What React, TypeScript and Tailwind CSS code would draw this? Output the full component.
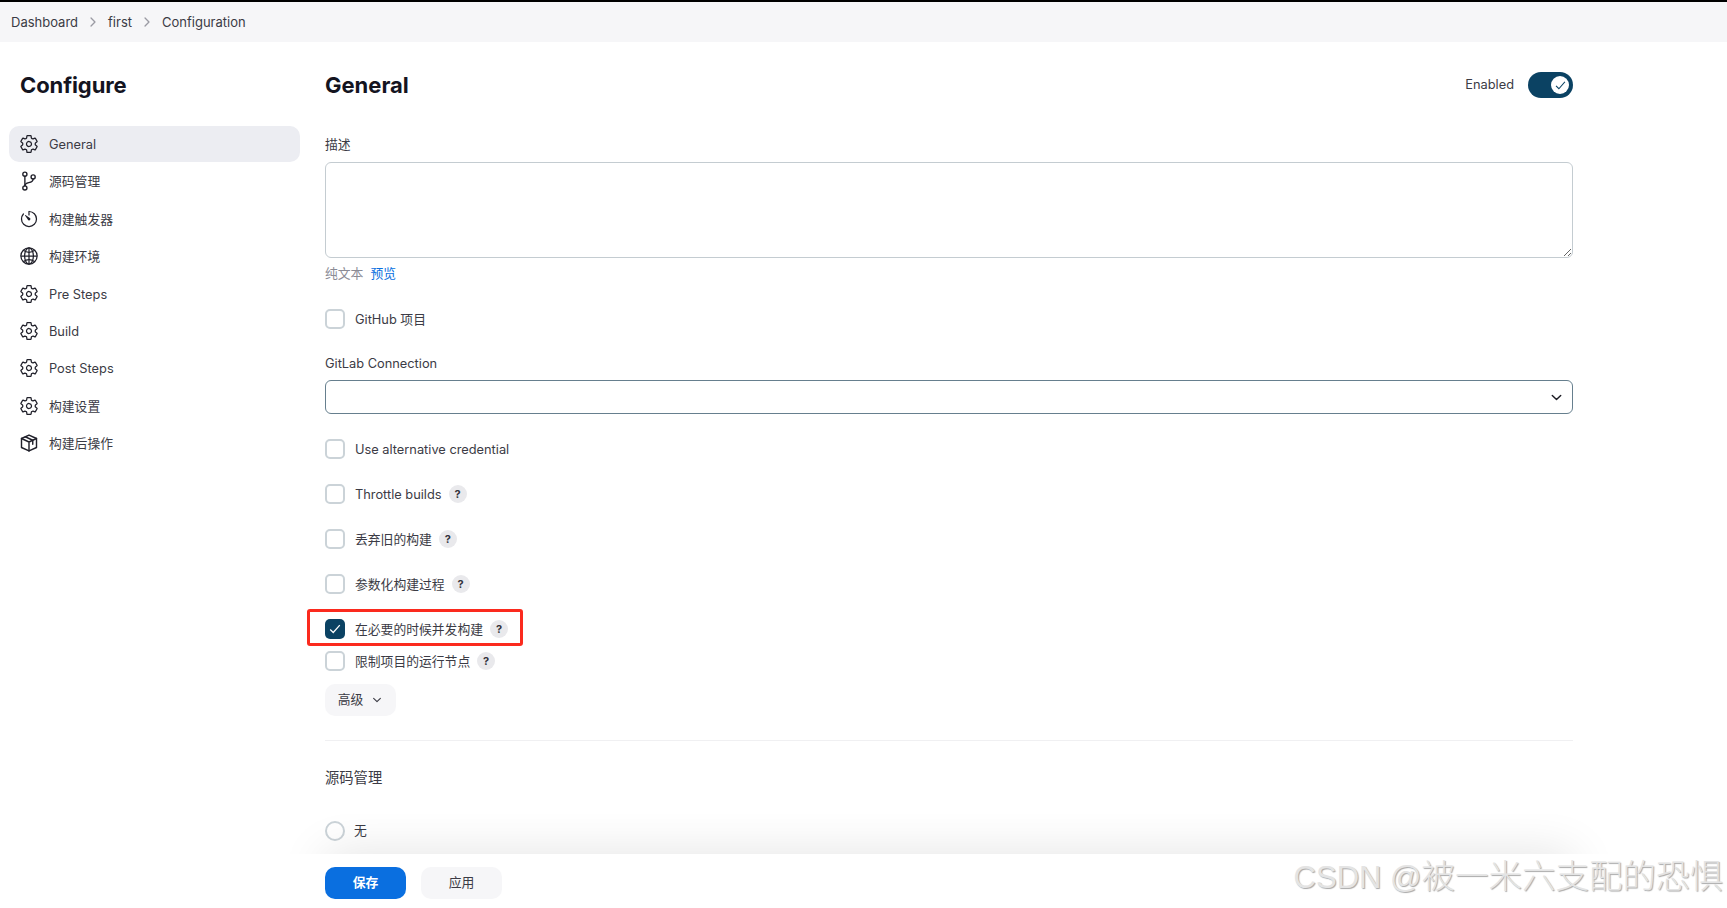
import {
  IoSettingsOutline,
  IoGitBranchOutline,
  IoTimerOutline,
  IoGlobeOutline,
  IoChevronDown,
  IoChevronForward,
  IoCheckmarkSharp,
} from "react-icons/io5";
import type { IconType } from "react-icons";

// box with a strap, the packaged-cube symbol used for the last nav entry
function PackageIcon({ className }: { className?: string }) {
  return (
    <svg viewBox="0 0 24 24" fill="none" stroke="currentColor" strokeWidth="1.7" strokeLinejoin="round" strokeLinecap="round" className={className}>
      <path d="M12 2.5 3 6.6v10.8l9 4.1 9-4.1V6.6z" />
      <path d="M3 6.6l9 4.2 9-4.2M12 10.8v10.7" />
      <path d="M7.5 4.5l9 4.2v4.8" />
    </svg>
  );
}

const navItems: { label: string; icon: IconType | typeof PackageIcon; iconClass: string }[] = [
  { label: "General", icon: IoSettingsOutline, iconClass: "text-[20px]" },
  { label: "源码管理", icon: IoGitBranchOutline, iconClass: "text-[22px] -mx-px" },
  { label: "构建触发器", icon: IoTimerOutline, iconClass: "text-[20px]" },
  { label: "构建环境", icon: IoGlobeOutline, iconClass: "text-[20px]" },
  { label: "Pre Steps", icon: IoSettingsOutline, iconClass: "text-[20px]" },
  { label: "Build", icon: IoSettingsOutline, iconClass: "text-[20px]" },
  { label: "Post Steps", icon: IoSettingsOutline, iconClass: "text-[20px]" },
  { label: "构建设置", icon: IoSettingsOutline, iconClass: "text-[20px]" },
  { label: "构建后操作", icon: PackageIcon, iconClass: "h-5 w-5" },
];

function Help() {
  return (
    <span className="ml-[7px] flex h-[18px] w-[18px] items-center justify-center rounded-full bg-[#e9e9ec] text-[11px] font-bold text-[#33333d]">
      ?
    </span>
  );
}

function Check({ label, help, className }: { label: string; help?: boolean; className: string }) {
  return (
    <div className={`flex h-5 items-center ${className}`}>
      <span className="h-5 w-5 rounded-[5px] border-2 border-[#cbd3d8] bg-white" />
      <span className="ml-[10px] pt-[2px]">{label}</span>
      {help && <Help />}
    </div>
  );
}

export default function App() {
  return (
    <div className="relative flex h-screen flex-col overflow-hidden bg-white text-[12.8px] leading-5 text-[#3b3b45] [font-family:Inter,'Noto_Sans_CJK_SC',sans-serif]">
      {/* breadcrumb */}
      <header className="flex h-[42px] shrink-0 items-center border-t-2 border-black bg-[#f6f6f8] pl-[11px] text-[13px]">
        <span>Dashboard</span>
        <IoChevronForward className="mx-[8px] text-[14px] text-[#9a9aa3]" />
        <span>first</span>
        <IoChevronForward className="mx-[8px] text-[14px] text-[#9a9aa3]" />
        <span>Configuration</span>
      </header>

      <div className="flex min-h-0 flex-1">
        {/* side panel */}
        <aside className="w-[325px] shrink-0 pl-[9px]">
          <h1 className="mt-[25px] flex h-9 items-center pl-[11px] text-[22px] font-bold tracking-[-0.1px] text-[#14141f]">
            Configure
          </h1>
          <nav className="mt-[23px] w-[291px]">
            {navItems.map((item, i) => (
              <div
                key={item.label}
                className={`mb-[1.4px] flex h-9 items-center rounded-[10px] pl-[10px] ${i === 0 ? "bg-[#ecedf2]" : ""}`}
              >
                <item.icon className={`text-[#20202a] ${item.iconClass}`} />
                <span className="ml-[10px] pt-[2px]">{item.label}</span>
              </div>
            ))}
          </nav>
        </aside>

        {/* form */}
        <main className="w-[1248px] shrink-0">
          <div className="mt-[25px] flex h-9 items-center justify-between">
            <h2 className="text-[22px] font-bold text-[#14141f]">General</h2>
            <div className="flex items-center">
              <span>Enabled</span>
              <span className="ml-[14px] flex h-[26px] w-[45px] items-center justify-end rounded-full bg-[#0b4263] pr-[4px]">
                <span className="flex h-[18px] w-[18px] items-center justify-center rounded-full bg-white">
                  <IoCheckmarkSharp className="text-[13px] text-[#0b4263]" />
                </span>
              </span>
            </div>
          </div>

          <div className="mt-[32px] h-[19px]">描述</div>
          <textarea
            readOnly
            className="mt-[8px] block h-[96px] w-full resize-y rounded-[6px] border border-[#c4ccd1] bg-white"
          />
          <div className="mt-[5px] flex h-5 items-center pt-[2px]">
            <span className="text-[#8b8b95]">纯文本</span>
            <span className="ml-[7px] text-[#0a6fe0]">预览</span>
          </div>

          <Check label="GitHub 项目" className="mt-[26px]" />

          <div className="mt-[25px] h-[19px]">GitLab Connection</div>
          <div className="mt-[7px] flex h-[34px] items-center justify-end rounded-[6px] border border-[#667f8e] pr-[8px]">
            <IoChevronDown className="text-[15px] text-[#1c1c24]" />
          </div>

          <Check label="Use alternative credential" className="mt-[25px]" />
          <Check label="Throttle builds" help className="mt-[25px]" />
          <Check label="丢弃旧的构建" help className="mt-[25px]" />
          <Check label="参数化构建过程" help className="mt-[25px]" />

          <div className="relative mt-[25px] flex h-5 items-center">
            <span className="flex h-5 w-5 items-center justify-center rounded-[5px] bg-[#0b4263]">
              <IoCheckmarkSharp className="text-[14px] text-white" />
            </span>
            <span className="ml-[10px] pt-[2px]">在必要的时候并发构建</span>
            <Help />
            {/* annotation box from the screenshot */}
            <span className="absolute -top-[10px] -left-[18px] h-[37px] w-[216px] rounded-[3px] border-[3px] border-[#fb2a1e]" />
          </div>

          <Check label="限制项目的运行节点" help className="mt-[12px]" />

          <button className="mt-[13px] flex h-8 w-[71px] items-center justify-center gap-[8px] rounded-[10px] bg-[#f6f6f8]">
            高级
            <IoChevronDown className="text-[12px]" />
          </button>

          <div className="mt-[24px] h-px bg-[#f0f0f2]" />
          <div className="mt-[27px] h-5 text-[14.3px]">源码管理</div>

          <div className="mt-[33px] flex h-5 items-center">
            <span className="h-5 w-5 rounded-full border-2 border-[#cbd3d8]" />
            <span className="ml-[9px]">无</span>
          </div>
        </main>
      </div>

      {/* sticky action bar */}
      <footer className="relative flex h-[54px] shrink-0 items-start bg-white pt-[13px] pl-[325px]">
        <div className="absolute -top-[40px] right-0 left-0 h-[40px] overflow-hidden">
          <div className="absolute top-full left-[325px] h-10 w-[1248px] shadow-[0_0_48px_rgba(0,0,0,0.12)]" />
        </div>
        <button className="h-8 w-[81px] rounded-[10px] bg-[#0a6fe0] font-semibold text-white">保存</button>
        <button className="ml-[15px] h-8 w-[81px] rounded-[10px] bg-[#f6f6f8]">应用</button>
      </footer>

      {/* image watermark */}
      <div className="absolute right-[4px] bottom-[10px] flex items-baseline text-[33.5px] leading-10 font-light text-[#e4e4e4] [text-shadow:1px_1px_1px_#a8a8a8]">
        <span className="whitespace-pre text-[31px] [font-family:'Liberation_Sans',sans-serif]">CSDN @</span>
        <span>被一米六支配的恐惧</span>
      </div>
    </div>
  );
}
